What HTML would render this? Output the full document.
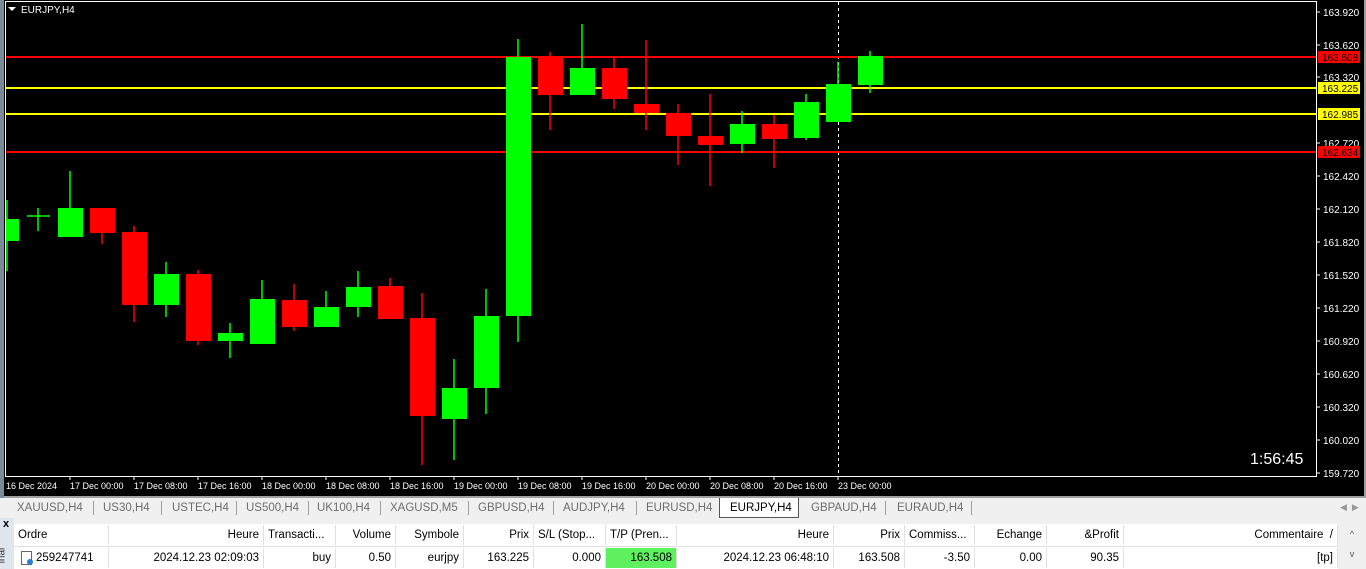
<!DOCTYPE html>
<html><head><meta charset="utf-8"><style>
body{margin:0;width:1366px;height:569px;overflow:hidden;background:#f0f0f0;font-family:"Liberation Sans",sans-serif;}
svg text{font-family:"Liberation Sans",sans-serif;}
#tabs{position:absolute;left:0;top:498px;width:1366px;height:20px;background:#f0f0f0;font-size:11.5px;color:#6d6d6d;}
#tabs span{position:absolute;top:4px;}
#tabs i{position:absolute;top:3px;width:1px;height:14px;background:#a0a0a0;}
#tbl{position:absolute;left:14px;top:524px;width:1352px;height:45px;background:#fff;font-size:11.5px;color:#000;}
.c{position:absolute;height:20px;line-height:20px;white-space:nowrap;overflow:hidden;box-sizing:border-box;padding:0 4px;border-right:1px solid #e0e0e0;}
</style></head><body>
<svg width="1366" height="498" style="position:absolute;left:0;top:0">
<rect x="0" y="0" width="1366" height="498" fill="#000"/>
<rect x="0" y="0" width="4" height="498" fill="#7b8a99"/>
<rect x="1364" y="0" width="2" height="498" fill="#a0a0a0"/>
<rect x="4" y="496" width="1362" height="2" fill="#a0a0a0"/>
<rect x="5.5" y="1.5" width="1311" height="475" fill="none" stroke="#fff" stroke-width="1"/>
<polygon points="8,7 16,7 12,11" fill="#fff"/>
<text x="21" y="13" fill="#fff" font-size="10">EURJPY,H4</text>
<line x1="838.5" y1="2" x2="838.5" y2="476" stroke="#fff" stroke-dasharray="3,3"/>
<g stroke-width="2">
<line x1="6" y1="57" x2="1316" y2="57" stroke="#ff0000"/>
<line x1="6" y1="88" x2="1316" y2="88" stroke="#ffff00"/>
<line x1="6" y1="114" x2="1316" y2="114" stroke="#ffff00"/>
<line x1="6" y1="152" x2="1316" y2="152" stroke="#ff0000"/>
</g>
<g stroke-width="1.5">
<line x1="7" y1="200" x2="7" y2="271" stroke="#00ff00"/><rect x="6" y="219" width="13" height="22" fill="#00ff00"/>
<line x1="38" y1="208" x2="38" y2="231" stroke="#00ff00"/><line x1="27" y1="216" x2="50" y2="216" stroke="#00ff00"/>
<line x1="70" y1="171" x2="70" y2="237" stroke="#00ff00"/><rect x="58" y="208" width="25" height="29" fill="#00ff00"/>
<line x1="102" y1="208" x2="102" y2="244" stroke="#ff0000"/><rect x="90" y="208" width="25" height="25" fill="#ff0000"/>
<line x1="134" y1="226" x2="134" y2="322" stroke="#ff0000"/><rect x="122" y="232" width="25" height="73" fill="#ff0000"/>
<line x1="166" y1="262" x2="166" y2="317" stroke="#00ff00"/><rect x="154" y="274" width="25" height="31" fill="#00ff00"/>
<line x1="198" y1="270" x2="198" y2="345" stroke="#ff0000"/><rect x="186" y="274" width="25" height="67" fill="#ff0000"/>
<line x1="230" y1="323" x2="230" y2="358" stroke="#00ff00"/><rect x="218" y="333" width="25" height="8" fill="#00ff00"/>
<line x1="262" y1="280" x2="262" y2="344" stroke="#00ff00"/><rect x="250" y="299" width="25" height="45" fill="#00ff00"/>
<line x1="294" y1="284" x2="294" y2="331" stroke="#ff0000"/><rect x="282" y="300" width="25" height="27" fill="#ff0000"/>
<line x1="326" y1="291" x2="326" y2="327" stroke="#00ff00"/><rect x="314" y="307" width="25" height="20" fill="#00ff00"/>
<line x1="358" y1="271" x2="358" y2="317" stroke="#00ff00"/><rect x="346" y="287" width="25" height="20" fill="#00ff00"/>
<line x1="390" y1="278" x2="390" y2="319" stroke="#ff0000"/><rect x="378" y="286" width="25" height="33" fill="#ff0000"/>
<line x1="422" y1="293" x2="422" y2="465" stroke="#ff0000"/><rect x="410" y="318" width="25" height="98" fill="#ff0000"/>
<line x1="454" y1="359" x2="454" y2="460" stroke="#00ff00"/><rect x="442" y="388" width="25" height="31" fill="#00ff00"/>
<line x1="486" y1="289" x2="486" y2="414" stroke="#00ff00"/><rect x="474" y="316" width="25" height="72" fill="#00ff00"/>
<line x1="518" y1="39" x2="518" y2="342" stroke="#00ff00"/><rect x="506" y="57" width="25" height="259" fill="#00ff00"/>
<line x1="550" y1="52" x2="550" y2="130" stroke="#ff0000"/><rect x="538" y="57" width="25" height="38" fill="#ff0000"/>
<line x1="582" y1="24" x2="582" y2="95" stroke="#00ff00"/><rect x="570" y="68" width="25" height="27" fill="#00ff00"/>
<line x1="614" y1="58" x2="614" y2="109" stroke="#ff0000"/><rect x="602" y="68" width="25" height="31" fill="#ff0000"/>
<line x1="646" y1="40" x2="646" y2="130" stroke="#ff0000"/><rect x="634" y="104" width="25" height="9" fill="#ff0000"/>
<line x1="678" y1="104" x2="678" y2="165" stroke="#ff0000"/><rect x="666" y="113" width="25" height="23" fill="#ff0000"/>
<line x1="710" y1="94" x2="710" y2="186" stroke="#ff0000"/><rect x="698" y="136" width="25" height="9" fill="#ff0000"/>
<line x1="742" y1="111" x2="742" y2="153" stroke="#00ff00"/><rect x="730" y="124" width="25" height="20" fill="#00ff00"/>
<line x1="774" y1="115" x2="774" y2="168" stroke="#ff0000"/><rect x="762" y="124" width="25" height="15" fill="#ff0000"/>
<line x1="806" y1="94" x2="806" y2="140" stroke="#00ff00"/><rect x="794" y="102" width="25" height="36" fill="#00ff00"/>
<line x1="838" y1="62" x2="838" y2="122" stroke="#00ff00"/><rect x="826" y="84" width="25" height="38" fill="#00ff00"/>
<line x1="870" y1="51" x2="870" y2="93" stroke="#00ff00"/><rect x="858" y="56" width="25" height="29" fill="#00ff00"/>
</g>
<g fill="#fff" font-size="10">
<text x="1323" y="16">163.920</text><text x="1323" y="49">163.620</text><text x="1323" y="81">163.320</text>
<text x="1323" y="147">162.720</text><text x="1323" y="180">162.420</text><text x="1323" y="213">162.120</text>
<text x="1323" y="246">161.820</text><text x="1323" y="279">161.520</text><text x="1323" y="312">161.220</text>
<text x="1323" y="345">160.920</text><text x="1323" y="378">160.620</text><text x="1323" y="411">160.320</text>
<text x="1323" y="444">160.020</text><text x="1323" y="477">159.720</text>
</g>
<g stroke="#fff"><line x1="1317" y1="12" x2="1320" y2="12"/><line x1="1317" y1="45" x2="1320" y2="45"/><line x1="1317" y1="77" x2="1320" y2="77"/><line x1="1317" y1="143" x2="1320" y2="143"/><line x1="1317" y1="176" x2="1320" y2="176"/><line x1="1317" y1="209" x2="1320" y2="209"/><line x1="1317" y1="242" x2="1320" y2="242"/><line x1="1317" y1="275" x2="1320" y2="275"/><line x1="1317" y1="308" x2="1320" y2="308"/><line x1="1317" y1="341" x2="1320" y2="341"/><line x1="1317" y1="374" x2="1320" y2="374"/><line x1="1317" y1="407" x2="1320" y2="407"/><line x1="1317" y1="440" x2="1320" y2="440"/><line x1="1317" y1="473" x2="1320" y2="473"/></g>
<rect x="1318" y="51" width="42" height="12" fill="#ff0000"/><text x="1322" y="61" font-size="10" fill="#000">163.508</text>
<rect x="1318" y="82" width="42" height="12" fill="#ffff00"/><text x="1322" y="92" font-size="10" fill="#000">163.225</text>
<rect x="1318" y="108" width="42" height="12" fill="#ffff00"/><text x="1322" y="118" font-size="10" fill="#000">162.985</text>
<rect x="1318" y="146" width="42" height="12" fill="#ff0000"/><text x="1322" y="156" font-size="10" fill="#000">162.634</text>
<text x="1250" y="464" fill="#fff" font-size="16">1:56:45</text>
<g fill="#fff" font-size="9">
<text x="6" y="489">16 Dec 2024</text><text x="70" y="489">17 Dec 00:00</text><text x="134" y="489">17 Dec 08:00</text><text x="198" y="489">17 Dec 16:00</text><text x="262" y="489">18 Dec 00:00</text><text x="326" y="489">18 Dec 08:00</text><text x="390" y="489">18 Dec 16:00</text><text x="454" y="489">19 Dec 00:00</text><text x="518" y="489">19 Dec 08:00</text><text x="582" y="489">19 Dec 16:00</text><text x="646" y="489">20 Dec 00:00</text><text x="710" y="489">20 Dec 08:00</text><text x="774" y="489">20 Dec 16:00</text><text x="838" y="489">23 Dec 00:00</text>
</g>
<g stroke="#fff"><line x1="70" y1="476" x2="70" y2="480"/><line x1="134" y1="476" x2="134" y2="480"/><line x1="198" y1="476" x2="198" y2="480"/><line x1="262" y1="476" x2="262" y2="480"/><line x1="326" y1="476" x2="326" y2="480"/><line x1="390" y1="476" x2="390" y2="480"/><line x1="454" y1="476" x2="454" y2="480"/><line x1="518" y1="476" x2="518" y2="480"/><line x1="582" y1="476" x2="582" y2="480"/><line x1="646" y1="476" x2="646" y2="480"/><line x1="710" y1="476" x2="710" y2="480"/><line x1="774" y1="476" x2="774" y2="480"/><line x1="838" y1="476" x2="838" y2="480"/></g>
</svg>
<div id="tabs">
<span style="left:17px">XAUUSD,H4</span><i style="left:93px"></i><span style="left:103px">US30,H4</span><i style="left:161px"></i><span style="left:172px">USTEC,H4</span><i style="left:236px"></i><span style="left:246px">US500,H4</span><i style="left:308px"></i><span style="left:317px">UK100,H4</span><i style="left:380px"></i><span style="left:390px">XAGUSD,M5</span><i style="left:468px"></i><span style="left:478px">GBPUSD,H4</span><i style="left:553px"></i><span style="left:563px">AUDJPY,H4</span><i style="left:636px"></i><span style="left:646px">EURUSD,H4</span>
<div style="position:absolute;left:719px;top:0;width:78px;height:19px;background:#fff;border:1px solid #555;border-top:none"></div>
<span style="left:730px;color:#000">EURJPY,H4</span><span style="left:811px">GBPAUD,H4</span><i style="left:885px"></i><span style="left:897px">EURAUD,H4</span><i style="left:971px"></i>
<span style="left:1340px;font-size:9px;color:#999">&#9664; &nbsp;&#9654;</span>
</div>
<div style="position:absolute;left:0;top:518px;width:14px;height:51px;background:#dfe6ee;font-size:11px"><b style="position:absolute;left:3px;top:0">x</b><span style="position:absolute;left:-6px;top:32px;transform:rotate(-90deg);font-size:10px;color:#333">inal</span></div>
<div id="tbl">
<div style="position:absolute;left:0;top:0;width:1352px;height:22px;border-bottom:1px solid #ddd"></div>
<div class="c" style="left:0;top:1px;width:95px">Ordre</div>
<div class="c" style="left:95px;top:1px;width:155px;text-align:right">Heure</div>
<div class="c" style="left:250px;top:1px;width:72px">Transacti...</div>
<div class="c" style="left:322px;top:1px;width:60px;text-align:right">Volume</div>
<div class="c" style="left:382px;top:1px;width:68px;text-align:right">Symbole</div>
<div class="c" style="left:450px;top:1px;width:70px;text-align:right">Prix</div>
<div class="c" style="left:520px;top:1px;width:72px">S/L (Stop...</div>
<div class="c" style="left:592px;top:1px;width:71px">T/P (Pren...</div>
<div class="c" style="left:663px;top:1px;width:157px;text-align:right">Heure</div>
<div class="c" style="left:820px;top:1px;width:71px;text-align:right">Prix</div>
<div class="c" style="left:891px;top:1px;width:70px">Commiss...</div>
<div class="c" style="left:961px;top:1px;width:72px;text-align:right">Echange</div>
<div class="c" style="left:1033px;top:1px;width:77px;text-align:right">&amp;Profit</div>
<div class="c" style="left:1110px;top:1px;width:214px;text-align:right">Commentaire &nbsp;/</div>
<div class="c" style="left:0;top:24px;width:95px;padding-left:22px">259247741</div>
<div style="position:absolute;left:7px;top:27px;width:9px;height:12px;border:1px solid #666;background:#fff"></div>
<div style="position:absolute;left:13px;top:35px;width:6px;height:6px;border-radius:50%;background:#2a7fd0"></div>
<div class="c" style="left:95px;top:24px;width:155px;text-align:right">2024.12.23 02:09:03</div>
<div class="c" style="left:250px;top:24px;width:72px;text-align:right">buy</div>
<div class="c" style="left:322px;top:24px;width:60px;text-align:right">0.50</div>
<div class="c" style="left:382px;top:24px;width:68px;text-align:right">eurjpy</div>
<div class="c" style="left:450px;top:24px;width:70px;text-align:right">163.225</div>
<div class="c" style="left:520px;top:24px;width:72px;text-align:right">0.000</div>
<div class="c" style="left:592px;top:24px;width:71px;text-align:right;background:#5ef05e">163.508</div>
<div class="c" style="left:663px;top:24px;width:157px;text-align:right">2024.12.23 06:48:10</div>
<div class="c" style="left:820px;top:24px;width:71px;text-align:right">163.508</div>
<div class="c" style="left:891px;top:24px;width:70px;text-align:right">-3.50</div>
<div class="c" style="left:961px;top:24px;width:72px;text-align:right">0.00</div>
<div class="c" style="left:1033px;top:24px;width:77px;text-align:right">90.35</div>
<div class="c" style="left:1110px;top:24px;width:214px;text-align:right">[tp]</div>
<div style="position:absolute;left:1324px;top:0;width:28px;height:45px;background:#f0f0f0;font-size:9px;color:#555;text-align:center;line-height:20px">^<br>v</div>
</div>
</body></html>
